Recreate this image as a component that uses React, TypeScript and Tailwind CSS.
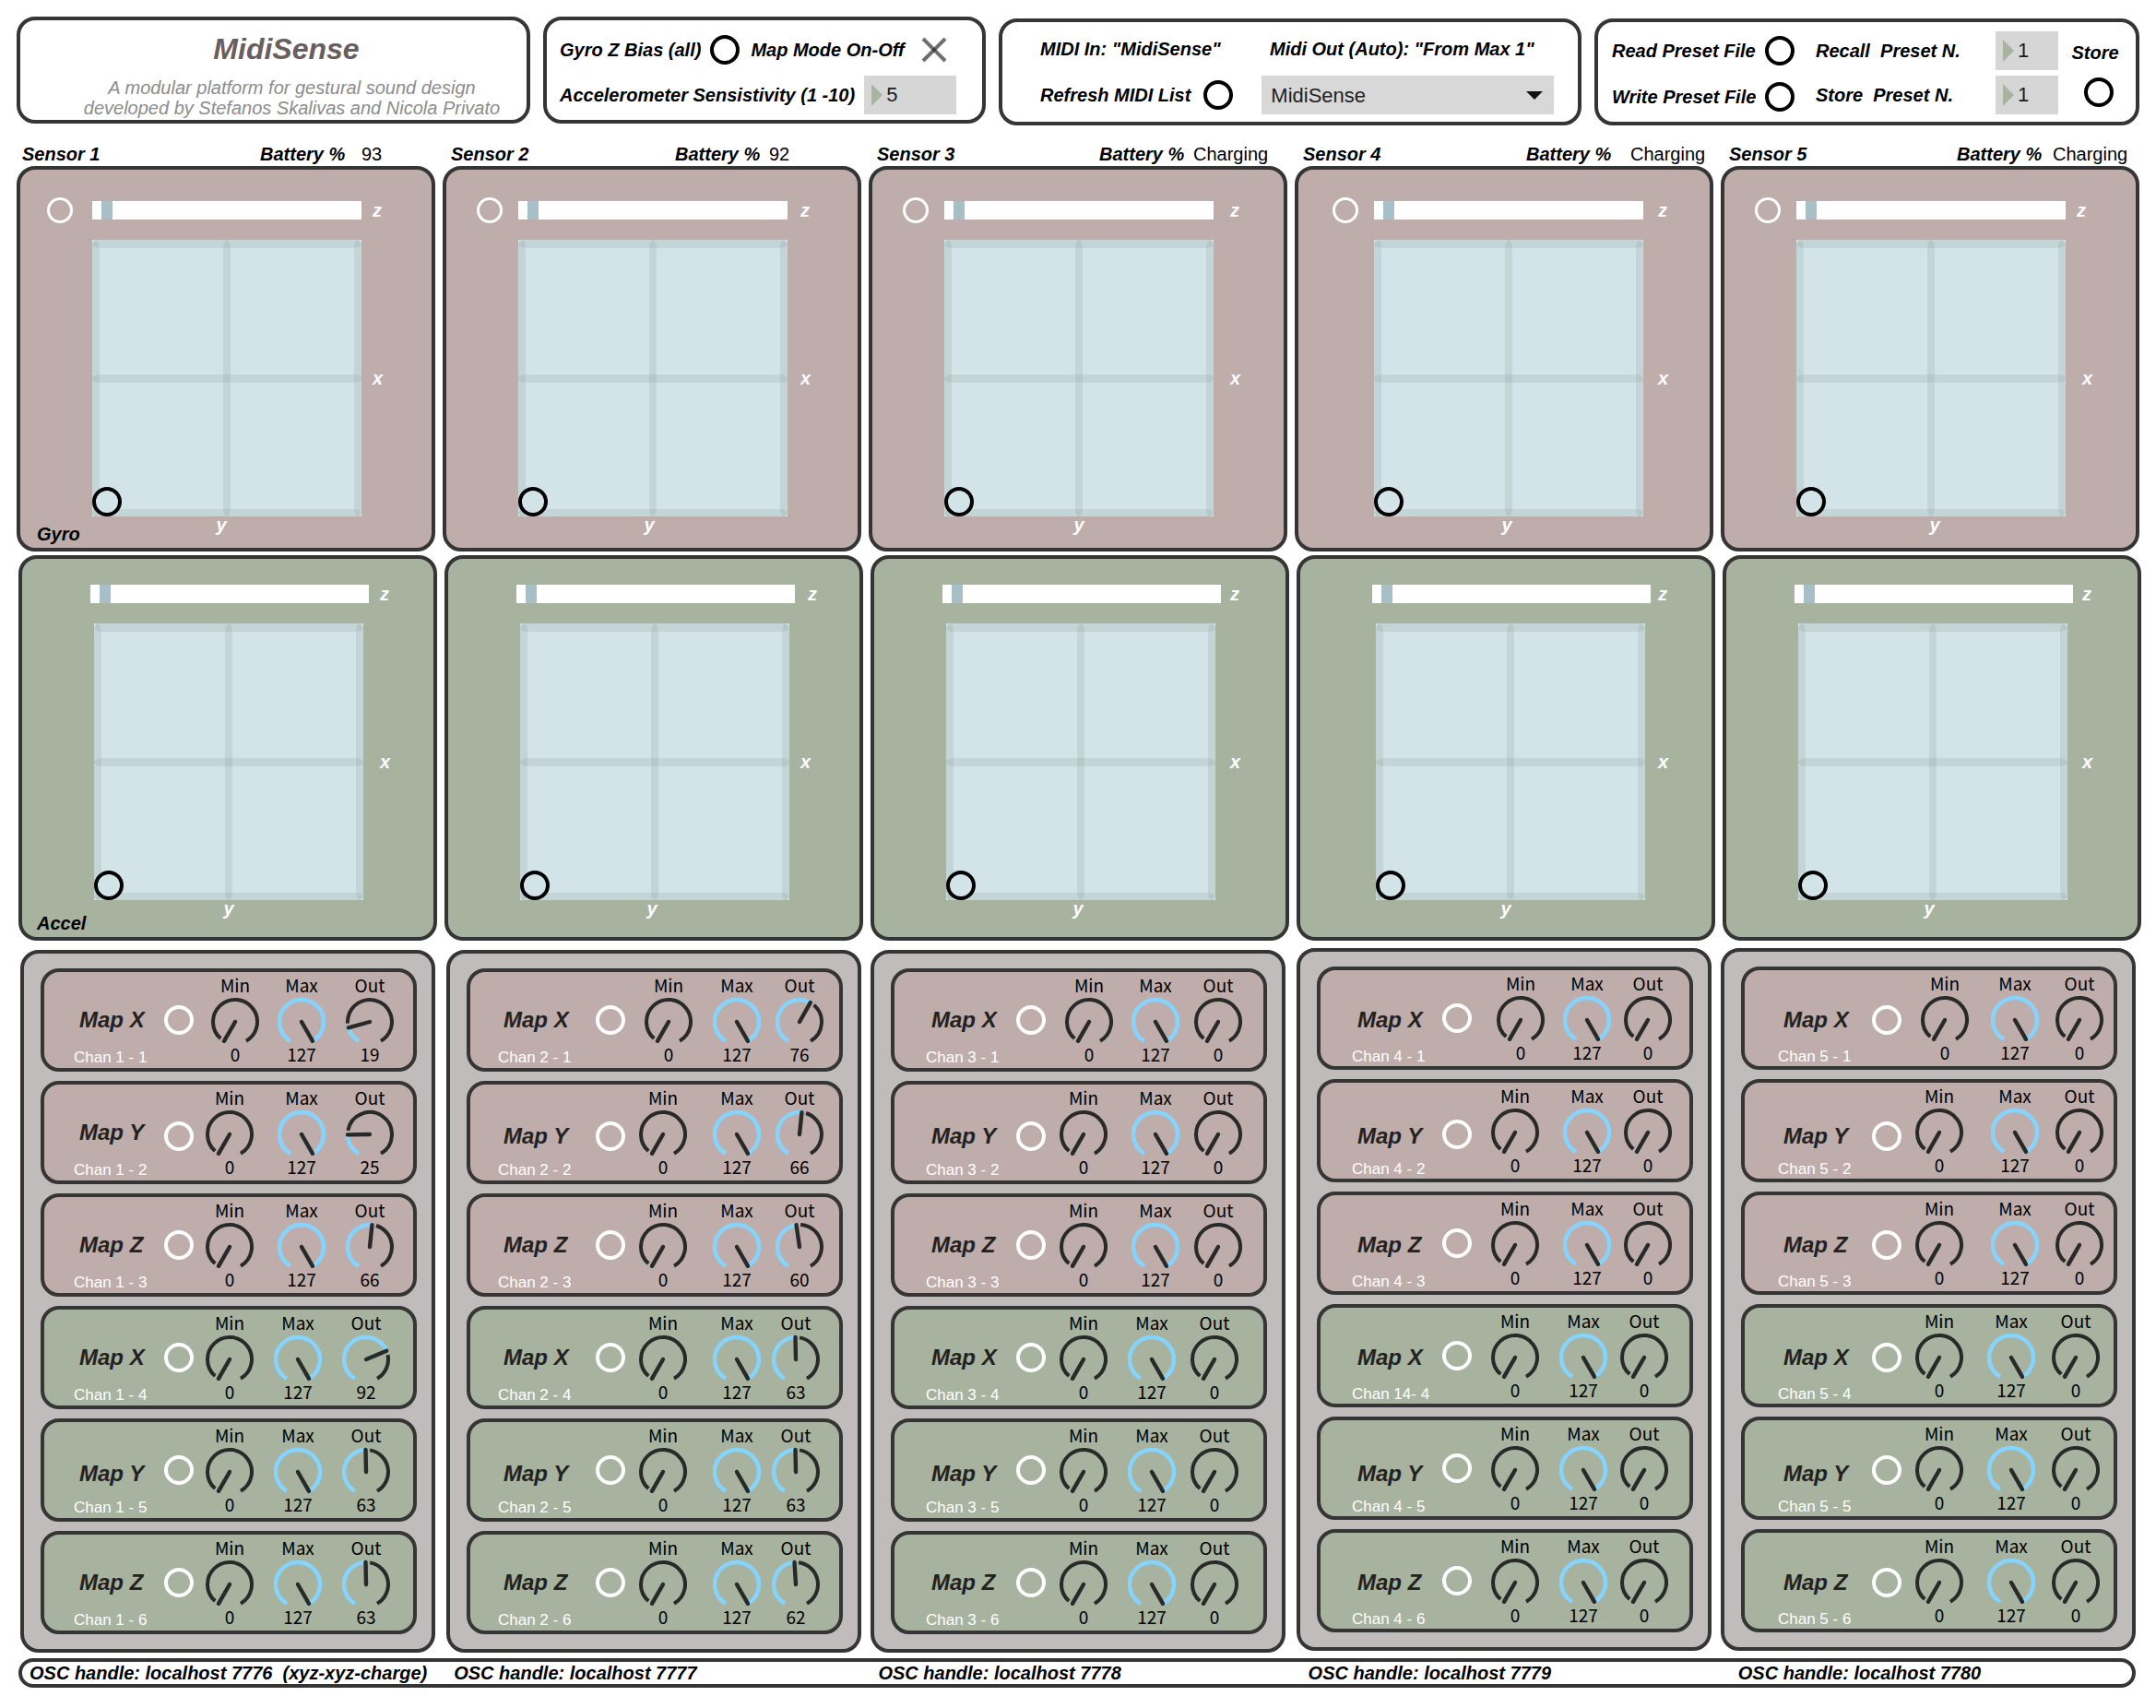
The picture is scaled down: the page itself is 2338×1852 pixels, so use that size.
import React from "react";

type Knobs = [number, number, number];

type Sensor = {
  id: number;
  battery: string;
  headCols: string;
  headPad: string;
  sliderCols: string;
  padCols: string;
  accSliderCols: string;
  accPadCols: string;
  gyroRing: string;
  gyroZ: string;
  gyroX: string;
  gyroY: string;
  accZ: string;
  accX: string;
  accY: string;
  mapBox: string;
  mapText: string;
  rowCols: [string, string, string];
  channels: string[];
  out: number[];
};

const channels = (n: number) => [1, 2, 3, 4, 5, 6].map((c) => `Chan ${n} - ${c}`);

const SENSORS: Sensor[] = [
  {
    id: 1,
    battery: "93",
    headCols: "grid-cols-[258fr_110fr_80fr]",
    headPad: "pl-1.5",
    sliderCols: "grid-cols-[78fr_292fr_76fr]",
    padCols: "grid-cols-[78fr_292fr_76fr]",
    accSliderCols: "grid-cols-[74fr_302fr_70fr]",
    accPadCols: "grid-cols-[78fr_292fr_76fr]",
    gyroRing: "ml-[29px]",
    gyroZ: "pl-3",
    gyroX: "pl-3",
    gyroY: "pr-3",
    accZ: "pl-3",
    accX: "pl-[18px]",
    accY: "pr-0",
    mapBox: "ml-1",
    mapText: "pl-8",
    rowCols: [
      "grid-cols-[130fr_51fr_72fr_74fr_73fr]",
      "grid-cols-[130fr_45fr_78fr_74fr_73fr]",
      "grid-cols-[130fr_45fr_74fr_74fr_77fr]",
    ],
    channels: channels(1),
    out: [19, 25, 66, 92, 63, 63],
  },
  {
    id: 2,
    battery: "92",
    headCols: "grid-cols-[243fr_102fr_100fr]",
    headPad: "pl-[9px]",
    sliderCols: "grid-cols-[78fr_292fr_76fr]",
    padCols: "grid-cols-[78fr_292fr_76fr]",
    accSliderCols: "grid-cols-[74fr_302fr_70fr]",
    accPadCols: "grid-cols-[78fr_292fr_76fr]",
    gyroRing: "ml-[33px]",
    gyroZ: "pl-[14px]",
    gyroX: "pl-[14px]",
    gyroY: "pr-2",
    accZ: "pl-[14px]",
    accX: "pl-3",
    accY: "pr-1.5",
    mapBox: "ml-1",
    mapText: "pl-[30px]",
    rowCols: [
      "grid-cols-[136fr_53fr_74fr_68fr_69fr]",
      "grid-cols-[136fr_47fr_80fr_68fr_69fr]",
      "grid-cols-[136fr_47fr_80fr_64fr_73fr]",
    ],
    channels: channels(2),
    out: [76, 66, 60, 63, 63, 62],
  },
  {
    id: 3,
    battery: "Charging",
    headCols: "grid-cols-[241fr_102fr_102fr]",
    headPad: "pl-[9px]",
    sliderCols: "grid-cols-[78fr_292fr_76fr]",
    padCols: "grid-cols-[78fr_292fr_76fr]",
    accSliderCols: "grid-cols-[74fr_302fr_70fr]",
    accPadCols: "grid-cols-[78fr_292fr_76fr]",
    gyroRing: "ml-[33px]",
    gyroZ: "pl-[18px]",
    gyroX: "pl-[18px]",
    gyroY: "pr-0",
    accZ: "pl-2.5",
    accX: "pl-4",
    accY: "pr-1.5",
    mapBox: "ml-0.5 mr-0.5",
    mapText: "pl-[34px]",
    rowCols: [
      "grid-cols-[132fr_53fr_72fr_68fr_75fr]",
      "grid-cols-[132fr_47fr_78fr_68fr_75fr]",
      "grid-cols-[132fr_47fr_74fr_68fr_79fr]",
    ],
    channels: channels(3),
    out: [0, 0, 0, 0, 0, 0],
  },
  {
    id: 4,
    battery: "Charging",
    headCols: "grid-cols-[242fr_113fr_90fr]",
    headPad: "pl-[9px]",
    sliderCols: "grid-cols-[82fr_292fr_72fr]",
    padCols: "grid-cols-[82fr_292fr_72fr]",
    accSliderCols: "grid-cols-[78fr_302fr_66fr]",
    accPadCols: "grid-cols-[82fr_292fr_72fr]",
    gyroRing: "ml-[37px]",
    gyroZ: "pl-4",
    gyroX: "pl-4",
    gyroY: "pr-1",
    accZ: "pl-2",
    accX: "pl-[14px]",
    accY: "pr-2.5",
    mapBox: "ml-0.5 mr-0.5 -mt-0.5",
    mapText: "pl-[34px]",
    rowCols: [
      "grid-cols-[132fr_59fr_72fr_66fr_71fr]",
      "grid-cols-[132fr_53fr_78fr_66fr_71fr]",
      "grid-cols-[132fr_53fr_74fr_66fr_75fr]",
    ],
    channels: ["Chan 4 - 1", "Chan 4 - 2", "Chan 4 - 3", "Chan 14- 4", "Chan 4 - 5", "Chan 4 - 6"],
    out: [0, 0, 0, 0, 0, 0],
  },
  {
    id: 5,
    battery: "Charging",
    headCols: "grid-cols-[247fr_104fr_94fr]",
    headPad: "pl-[9px]",
    sliderCols: "grid-cols-[78fr_292fr_76fr]",
    padCols: "grid-cols-[78fr_292fr_76fr]",
    accSliderCols: "grid-cols-[74fr_302fr_70fr]",
    accPadCols: "grid-cols-[78fr_292fr_76fr]",
    gyroRing: "ml-[33px]",
    gyroZ: "pl-3",
    gyroX: "pl-[18px]",
    gyroY: "pl-2",
    accZ: "pl-2.5",
    accX: "pl-4",
    accY: "pr-2",
    mapBox: "mr-1 -mt-0.5",
    mapText: "pl-9",
    rowCols: [
      "grid-cols-[138fr_53fr_76fr_70fr_63fr]",
      "grid-cols-[138fr_47fr_82fr_70fr_63fr]",
      "grid-cols-[138fr_47fr_78fr_70fr_67fr]",
    ],
    channels: channels(5),
    out: [0, 0, 0, 0, 0, 0],
  },
];

const LABEL = "text-xl leading-6 font-bold italic whitespace-pre";

function Ring({ label, className = "" }: { label: string; className?: string }) {
  return (
    <button
      type="button"
      aria-label={label}
      className={`block size-8 shrink-0 rounded-full border-4 border-black bg-transparent ${className}`}
    />
  );
}

function NumberBox({ label, value, className = "" }: { label: string; value: string; className?: string }) {
  return (
    <label className={`flex h-[42px] items-center bg-[#d6d6d6] pl-2 ${className}`}>
      <svg viewBox="0 0 12 24" className="h-6 w-3 shrink-0" aria-hidden="true">
        <path d="M0 0L12 12L0 24Z" fill="#a8b3a0" />
      </svg>
      <input
        type="text"
        aria-label={label}
        defaultValue={value}
        className="ml-1 w-full min-w-0 bg-transparent text-[22px] leading-7 text-[#1c1c1c] outline-none"
      />
    </label>
  );
}

function XYPad({ label }: { label: string }) {
  return (
    <svg
      viewBox="0 0 292 300"
      preserveAspectRatio="none"
      role="img"
      aria-label={label}
      className="block h-[300px] w-full bg-[#d2e4e8]"
    >
      <g fill="#4a5a4a" fillOpacity="0.105">
        <rect x="0" y="0" width="292" height="9" rx="8" ry="4.5" />
        <rect x="0" y="146" width="292" height="9" rx="8" ry="4.5" />
        <rect x="0" y="292" width="292" height="9" rx="8" ry="4.5" />
        <rect x="0" y="0" width="8" height="300" rx="4" ry="9" />
        <rect x="142" y="0" width="8" height="300" rx="4" ry="9" />
        <rect x="284" y="0" width="8" height="300" rx="4" ry="9" />
      </g>
      <circle cx="16" cy="284" r="14" fill="#d2e4e8" stroke="#000" strokeWidth="4" />
    </svg>
  );
}

const RANGE =
  "block h-5 w-full appearance-none bg-white [&::-webkit-slider-thumb]:h-5 [&::-webkit-slider-thumb]:w-3 [&::-webkit-slider-thumb]:appearance-none [&::-webkit-slider-thumb]:bg-[#a7c0c7]";

function GyroPanel({ s }: { s: Sensor }) {
  return (
    <section className="rounded-[20px] border-4 border-[#353535] bg-[#bfadac] pt-[34px] text-white">
      <div className={`grid grid-rows-[20px] items-center ${s.sliderCols}`}>
        <button
          type="button"
          aria-label={`Calibrate gyro ${s.id}`}
          className={`size-7 rounded-full border-3 border-white ${s.gyroRing}`}
        />
        <input type="range" min={0} max={280} defaultValue={10} aria-label={`Gyro ${s.id} z`} className={RANGE} />
        <span className={`${LABEL} ${s.gyroZ}`}>z</span>
      </div>
      <div className={`mt-[22px] grid items-center ${s.padCols}`}>
        <span />
        <XYPad label={`Gyro ${s.id} x y`} />
        <span className={`${LABEL} ${s.gyroX}`}>x</span>
      </div>
      <div className={`grid h-[34px] ${s.padCols}`}>
        <h3 className="mt-[9px] pl-[18px] text-xl leading-5 font-bold text-black italic">{s.id === 1 ? "Gyro" : ""}</h3>
        <span className={`text-center text-xl leading-[18px] font-bold italic ${s.gyroY}`}>y</span>
        <span />
      </div>
    </section>
  );
}

function AccelPanel({ s }: { s: Sensor }) {
  return (
    <section className="mt-1 -mr-0.5 ml-0.5 rounded-[20px] border-4 border-[#353535] bg-[#a7b29f] pt-7 text-white">
      <div className={`grid grid-rows-[20px] items-center ${s.accSliderCols}`}>
        <span />
        <input type="range" min={0} max={290} defaultValue={10} aria-label={`Accel ${s.id} z`} className={RANGE} />
        <span className={`${LABEL} ${s.accZ}`}>z</span>
      </div>
      <div className={`mt-[22px] grid items-center ${s.accPadCols}`}>
        <span />
        <XYPad label={`Accel ${s.id} x y`} />
        <span className={`${LABEL} ${s.accX}`}>x</span>
      </div>
      <div className={`grid h-10 ${s.accPadCols}`}>
        <h3 className="mt-[15px] pl-4 text-xl leading-5 font-bold text-black italic">{s.id === 1 ? "Accel" : ""}</h3>
        <span className={`text-center text-xl leading-[18px] font-bold italic ${s.accY}`}>y</span>
        <span />
      </div>
    </section>
  );
}

function polar(deg: number, r: number) {
  const a = ((deg - 90) * Math.PI) / 180;
  return [26 + r * Math.cos(a), 29 + r * Math.sin(a)];
}

function arc(from: number, to: number, r: number) {
  const [x1, y1] = polar(from, r);
  const [x2, y2] = polar(to, r);
  return `M${x1} ${y1}A${r} ${r} 0 ${to - from > 180 ? 1 : 0} 1 ${x2} ${y2}`;
}

function Knob({ name, value }: { name: string; value: number }) {
  const angle = -150 + (300 * value) / 127;
  const rest = angle + 11;
  const [nx, ny] = polar(angle, 24);
  return (
    <label className="relative flex w-[52px] flex-col items-center pt-1 font-['Noto_Sans_CJK_SC',sans-serif] text-[19px] leading-5 text-black">
      <span>{name}</span>
      <svg viewBox="0 -1 52 55" className="h-[55px] w-[52px]" aria-hidden="true">
        {rest < 150 && <path d={arc(rest, 150, 24)} fill="none" stroke="#282a29" strokeWidth="4" />}
        {value > 0 && <path d={arc(-150, angle, 24)} fill="none" stroke="#86d4fc" strokeWidth="4.6" />}
        <path d={`M26 29L${nx} ${ny}`} stroke="#282a29" strokeWidth="4.4" strokeLinecap="round" />
      </svg>
      <span>{value}</span>
      <input
        type="range"
        min={0}
        max={127}
        defaultValue={value}
        className="absolute inset-x-0 top-6 h-12 w-full opacity-0"
      />
    </label>
  );
}

const ROW_TEXT = {
  normal: { top: "pt-[38px]", gap: "mt-4" },
  low: { top: "pt-[42px]", gap: "mt-3" },
};

const ROW_TEXT_SHIFTED = {
  normal: { top: "pt-10", gap: "mt-[15px]" },
  low: { top: "pt-11", gap: "mt-[11px]" },
};

function MapRow({ s, row }: { s: Sensor; row: number }) {
  const axis = ["X", "Y", "Z"][row % 3];
  const knobs: Knobs = [0, 127, s.out[row]];
  const cols = row === 0 ? s.rowCols[0] : row < 3 ? s.rowCols[1] : s.rowCols[2];
  const low = row === 4 || (row === 1 && s.id !== 1);
  const text = (s.id > 3 ? ROW_TEXT_SHIFTED : ROW_TEXT)[low ? "low" : "normal"];
  const ringTop = s.id === 5 ? (row === 1 ? "mt-[42px]" : "mt-[38px]") : row === 1 ? "mt-10" : "mt-9";
  return (
    <div
      className={`grid h-28 items-start rounded-[20px] border-4 border-[#353535] ${row < 3 ? "bg-[#bfadac]" : "bg-[#a7b29f]"} ${cols}`}
    >
      <div className={`whitespace-nowrap ${s.mapText} ${text.top}`}>
        <h4 className="ml-1.5 text-2xl leading-7 font-bold text-[#222] italic">Map {axis}</h4>
        <p className={`text-[17px] leading-[22px] text-white ${text.gap}`}>{s.channels[row]}</p>
      </div>
      <button
        type="button"
        aria-label={`Map ${axis} ${s.channels[row]}`}
        className={`size-8 rounded-full border-4 border-white ${ringTop}`}
      />
      <Knob name="Min" value={knobs[0]} />
      <Knob name="Max" value={knobs[1]} />
      <Knob name="Out" value={knobs[2]} />
    </div>
  );
}

function SensorColumn({ s }: { s: Sensor }) {
  return (
    <article className="flex min-w-0 flex-col">
      <header className={`grid h-[26px] items-center ${s.headCols} ${s.headPad}`}>
        <h2 className={LABEL}>Sensor {s.id}</h2>
        <span className={LABEL}>Battery %</span>
        <span className="text-xl leading-6">{s.battery}</span>
      </header>
      <GyroPanel s={s} />
      <AccelPanel s={s} />
      <div className="mt-2.5">
        <section
          className={`flex flex-col gap-2.5 rounded-[20px] border-4 border-[#353535] bg-[#c0bcbb] py-4 pr-4 pl-[18px] ${s.mapBox}`}
        >
          {[0, 1, 2, 3, 4, 5].map((row) => (
            <MapRow key={row} s={s} row={row} />
          ))}
        </section>
      </div>
    </article>
  );
}

function Header() {
  const box = "h-[116px] rounded-[20px] border-4 border-[#353535] bg-white";
  return (
    <div className="grid grid-cols-[557fr_480fr_632fr_591fr] gap-x-[14px]">
      <div className={`${box} pt-[11px] text-center whitespace-nowrap`}>
        <h1 className="pl-7 text-[32px] leading-10 font-bold text-[#6a5d5e] italic">MidiSense</h1>
        <p className="mt-[11px] pl-10 text-xl leading-[22px] text-[#8c8c8c] italic">
          A modular platform for gestural sound design
          <br />
          developed by Stefanos Skalivas and Nicola Privato
        </p>
      </div>

      <div className={`${box} flex flex-col gap-[7px] pt-[11px] pl-[14px]`}>
        <div className="flex h-[42px] items-center">
          <span className={LABEL}>Gyro Z Bias (all)</span>
          <Ring label="Gyro Z Bias (all)" className="ml-2.5" />
          <label className="ml-3 flex items-center gap-4">
            <span className={LABEL}>Map Mode On-Off</span>
            <input type="checkbox" defaultChecked className="peer sr-only" />
            <svg viewBox="0 0 32 32" className="size-8" aria-hidden="true">
              <g stroke="#2a2a2a" strokeOpacity="0.68" strokeWidth="4">
                <path d="M4 4L28 28" />
                <path d="M28 4L4 28" />
              </g>
            </svg>
          </label>
        </div>
        <div className="flex h-[42px] items-center gap-2.5">
          <span className={LABEL}>Accelerometer Sensistivity (1 -10)</span>
          <NumberBox label="Accelerometer Sensistivity (1 -10)" value="5" className="w-[100px]" />
        </div>
      </div>

      <div className={`${box} mt-0.5 flex flex-col gap-2 pt-2 pr-[26px] pl-[41px]`}>
        <div className="grid h-[42px] grid-cols-[249fr_308fr] items-center">
          <span className={LABEL}>MIDI In: "MidiSense"</span>
          <span className={LABEL}>Midi Out (Auto): "From Max 1"</span>
        </div>
        <div className="flex h-[42px] items-center">
          <span className={LABEL}>Refresh MIDI List</span>
          <Ring label="Refresh MIDI List" className="ml-[14px]" />
          <div className="relative ml-[31px] min-w-0 flex-1">
            <select
              aria-label="MIDI port"
              className="block h-[42px] w-full appearance-none bg-[#d8d8d8] pl-2.5 text-[22px] text-[#222]"
            >
              <option>MidiSense</option>
            </select>
            <svg viewBox="0 0 18 9" className="pointer-events-none absolute top-[17px] right-3 h-[9px] w-[18px]" aria-hidden="true">
              <path d="M0 0H18L9 9Z" fill="#111" />
            </svg>
          </div>
        </div>
      </div>

      <div className={`${box} mt-0.5 grid grid-cols-[221fr_195fr_68fr_84fr] pt-2.5 pl-[15px]`}>
        <div className="flex w-[198px] flex-col gap-2">
          <div className="flex h-[42px] items-center justify-between">
            <span className={LABEL}>Read Preset File</span>
            <Ring label="Read Preset File" />
          </div>
          <div className="flex h-[42px] items-center justify-between">
            <span className={LABEL}>Write Preset File</span>
            <Ring label="Write Preset File" />
          </div>
        </div>
        <div className="flex flex-col gap-1.5">
          <span className={`${LABEL} flex h-[42px] items-center`}>{"Recall  Preset N."}</span>
          <span className={`${LABEL} flex h-[42px] items-center`}>{"Store  Preset N."}</span>
        </div>
        <div className="flex flex-col gap-1.5">
          <NumberBox label="Recall Preset N." value="1" />
          <NumberBox label="Store Preset N." value="1" />
        </div>
        <div className="flex flex-col items-center gap-[15px] pt-[11px] pr-1">
          <span className={LABEL}>Store</span>
          <Ring label="Store" className="ml-2" />
        </div>
      </div>
    </div>
  );
}

export default function App() {
  return (
    <main className="min-h-screen bg-white px-[18px] pt-[18px] pb-5 font-['Liberation_Sans',Arial,sans-serif] text-black">
      <Header />
      <div className="mt-[18px] grid grid-cols-5 gap-2">
        {SENSORS.map((s) => (
          <SensorColumn key={s.id} s={s} />
        ))}
      </div>
      <footer
        className={`mt-1.5 mr-1 ml-0.5 grid h-8 grid-cols-[460fr_460fr_466fr_466fr_427fr] items-center rounded-[16px] border-4 border-[#353535] bg-white pl-2 ${LABEL}`}
      >
        <span>{"OSC handle: localhost 7776  (xyz-xyz-charge)"}</span>
        <span>OSC handle: localhost 7777</span>
        <span>OSC handle: localhost 7778</span>
        <span>OSC handle: localhost 7779</span>
        <span>OSC handle: localhost 7780</span>
      </footer>
    </main>
  );
}
